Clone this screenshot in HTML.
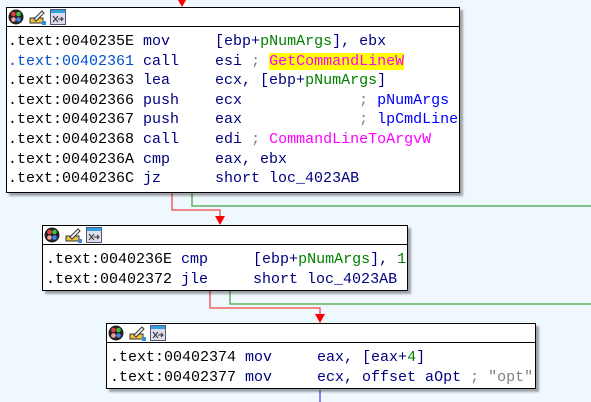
<!DOCTYPE html>
<html><head><meta charset="utf-8"><style>
html,body{margin:0;padding:0;width:591px;height:402px;overflow:hidden;background:#f0f8ff;}
.blk{position:absolute;background:#fff;border:1px solid #000;box-shadow:3px 3px 2px rgba(0,0,0,0.35);}
.hd{height:18px;border-bottom:1px solid #000;position:relative;}
.ic{position:absolute;top:1px;}
.code{font-family:"Liberation Mono",monospace;font-size:15px;line-height:19.6px;white-space:pre;color:#000080;padding:5px 0 0 1px;}
.a{color:#000;} .b{color:#0050d0;} .g{color:#008000;} .m{color:#ff00ff;} .c{color:#0000ff;} .s{color:#808080;}
.hl{background:#ffff00;}
svg.l{position:absolute;left:0;top:0;}
</style></head><body>
<svg class="l" width="591" height="402">
<g fill="none" stroke-width="1.5">
<path d="M182 0V4" stroke="#f05050"/>
<path d="M172 193V210H220V220" stroke="#f06060"/>
<path d="M192 193V206H591" stroke="#60b060"/>
<path d="M210 291V308H320V318" stroke="#f06060"/>
<path d="M230 291V304H591" stroke="#60b060"/>
<path d="M320 390V402" stroke="#6060f0"/>
</g>
<path d="M178 0H186L182 7Z" fill="#ff0000"/>
<path d="M215 216H225L220 225Z" fill="#ff0000"/>
<path d="M315 314H325L320 323Z" fill="#ff0000"/>
</svg>

<div class="blk" style="left:6px;top:7px;width:452px;height:184px;">
<div class="hd">
<svg class="ic" style="left:1px" width="16" height="16"><circle cx="8" cy="8" r="7.5" fill="#222"/><circle cx="5.5" cy="5" r="2.3" fill="#e04040"/><circle cx="10.5" cy="5" r="2.3" fill="#40c040"/><circle cx="10.5" cy="10.5" r="2.3" fill="#4080f0"/><circle cx="5.5" cy="10.5" r="2.3" fill="#f0a0a0"/></svg>
<svg class="ic" style="left:22px" width="17" height="16"><path d="M1 14H14V9H1Z" fill="#f0c040" stroke="#333"/><path d="M5 10L13 2L15 4L7 12Z" fill="#fff" stroke="#333"/><path d="M13 12h4v4h-4z" fill="#3090e0"/></svg>
<svg class="ic" style="left:43px" width="16" height="16"><rect x=".5" y=".5" width="15" height="15" fill="#dde" stroke="#557"/><rect x="1" y="1" width="14" height="3" fill="#30a0e0"/><path d="M3 7L8 13M8 7L3 13M8 10H13M11 8L13 10L11 12" stroke="#333" fill="none"/></svg>
</div>
<div class="code"><span class="a">.text:0040235E</span> mov     [ebp+<span class="g">pNumArgs</span>], ebx
<span class="b">.text:00402361</span> call    esi <span class="s">;</span> <span class="m hl">GetCommandLineW</span>
<span class="a">.text:00402363</span> lea     ecx, [ebp+<span class="g">pNumArgs</span>]
<span class="a">.text:00402366</span> push    ecx             <span class="s">;</span> <span class="c">pNumArgs</span>
<span class="a">.text:00402367</span> push    eax             <span class="s">;</span> <span class="c">lpCmdLine</span>
<span class="a">.text:00402368</span> call    edi <span class="s">;</span> <span class="m">CommandLineToArgvW</span>
<span class="a">.text:0040236A</span> cmp     eax, ebx
<span class="a">.text:0040236C</span> jz      short loc_4023AB</div>
</div>

<div class="blk" style="left:42px;top:225px;width:364px;height:64px;">
<div class="hd">
<svg class="ic" style="left:1px" width="16" height="16"><circle cx="8" cy="8" r="7.5" fill="#222"/><circle cx="5.5" cy="5" r="2.3" fill="#e04040"/><circle cx="10.5" cy="5" r="2.3" fill="#40c040"/><circle cx="10.5" cy="10.5" r="2.3" fill="#4080f0"/><circle cx="5.5" cy="10.5" r="2.3" fill="#f0a0a0"/></svg>
<svg class="ic" style="left:22px" width="17" height="16"><path d="M1 14H14V9H1Z" fill="#f0c040" stroke="#333"/><path d="M5 10L13 2L15 4L7 12Z" fill="#fff" stroke="#333"/><path d="M13 12h4v4h-4z" fill="#3090e0"/></svg>
<svg class="ic" style="left:43px" width="16" height="16"><rect x=".5" y=".5" width="15" height="15" fill="#dde" stroke="#557"/><rect x="1" y="1" width="14" height="3" fill="#30a0e0"/><path d="M3 7L8 13M8 7L3 13M8 10H13M11 8L13 10L11 12" stroke="#333" fill="none"/></svg>
</div>
<div class="code" style="padding-left:3px"><span class="a">.text:0040236E</span> cmp     [ebp+<span class="g">pNumArgs</span>], <span class="g">1</span>
<span class="a">.text:00402372</span> jle     short loc_4023AB</div>
</div>

<div class="blk" style="left:106px;top:323px;width:428px;height:64px;">
<div class="hd">
<svg class="ic" style="left:1px" width="16" height="16"><circle cx="8" cy="8" r="7.5" fill="#222"/><circle cx="5.5" cy="5" r="2.3" fill="#e04040"/><circle cx="10.5" cy="5" r="2.3" fill="#40c040"/><circle cx="10.5" cy="10.5" r="2.3" fill="#4080f0"/><circle cx="5.5" cy="10.5" r="2.3" fill="#f0a0a0"/></svg>
<svg class="ic" style="left:22px" width="17" height="16"><path d="M1 14H14V9H1Z" fill="#f0c040" stroke="#333"/><path d="M5 10L13 2L15 4L7 12Z" fill="#fff" stroke="#333"/><path d="M13 12h4v4h-4z" fill="#3090e0"/></svg>
<svg class="ic" style="left:43px" width="16" height="16"><rect x=".5" y=".5" width="15" height="15" fill="#dde" stroke="#557"/><rect x="1" y="1" width="14" height="3" fill="#30a0e0"/><path d="M3 7L8 13M8 7L3 13M8 10H13M11 8L13 10L11 12" stroke="#333" fill="none"/></svg>
</div>
<div class="code" style="padding-left:3px"><span class="a">.text:00402374</span> mov     eax, [eax+<span class="g">4</span>]
<span class="a">.text:00402377</span> mov     ecx, offset aOpt <span class="s">; "opt"</span></div>
</div>
</body></html>
